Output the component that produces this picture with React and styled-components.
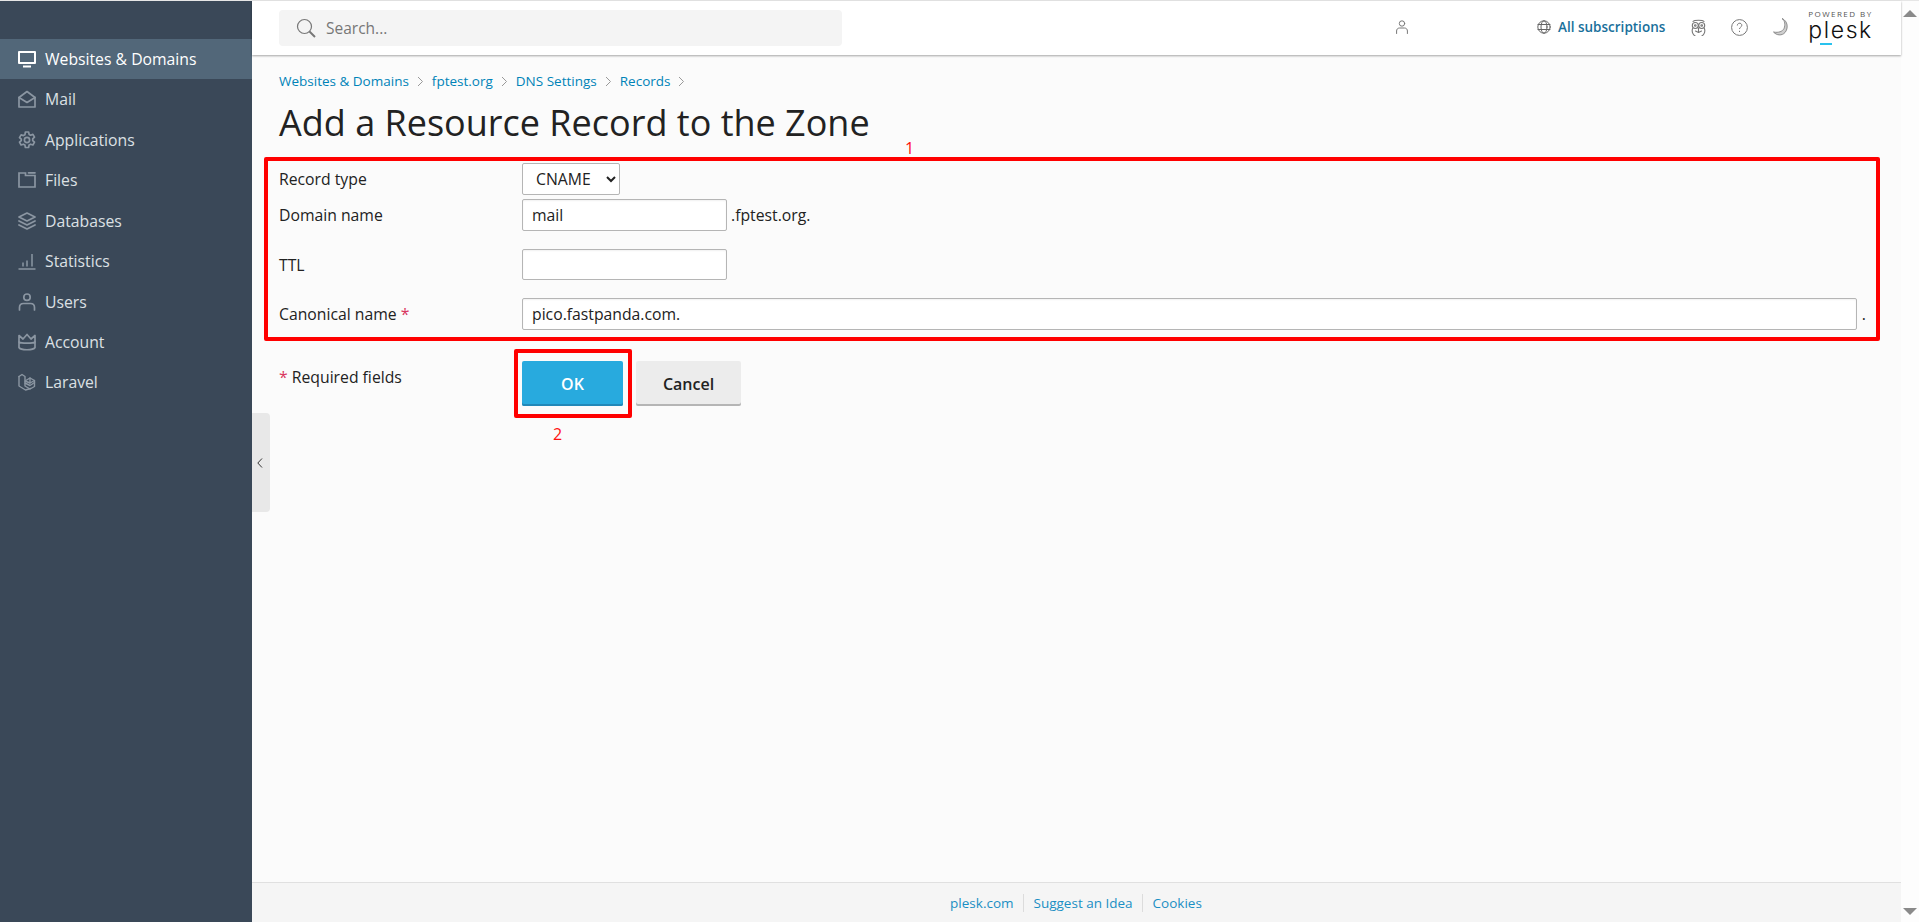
import React from "react";
import styled, { createGlobalStyle } from "styled-components";

const Global = createGlobalStyle`
  html, body { margin: 0; padding: 0; height: 100%; overflow: hidden; }
  body { font-family: "Open Sans", "Noto Sans", sans-serif; color: #222; background: #fdfdfd; }
  * { box-sizing: border-box; }
`;

const Page = styled.div`
  height: 922px;
  padding-top: 1px;
  background: #e6e6e6;
  display: grid;
  grid-template-columns: 252px 1fr 18px;
`;

const Sidebar = styled.nav`
  background: #3a4858;
  padding-top: 38px;
`;

const NavItem = styled.a`
  display: flex;
  align-items: center;
  gap: 9px;
  height: 40.47px;
  padding: 0 0 1px 18px;
  font-size: 15.75px;
  color: ${(p) => (p.$active ? "#ffffff" : "#dce0e4")};
  background: ${(p) => (p.$active ? "#526779" : "transparent")};
  svg { color: ${(p) => (p.$active ? "#ffffff" : "#8b96a2")}; flex: none; }
`;

const Main = styled.div`
  position: relative;
  display: flex;
  flex-direction: column;
  min-width: 0;
  background: #fbfbfb;
`;

const Header = styled.header`
  height: 54px;
  flex: none;
  background: #fff;
  box-shadow: 0 1px 2px rgba(0, 0, 0, 0.35);
  display: flex;
  align-items: center;
  padding: 0 0 2px 27px;
`;

const SearchBar = styled.label`
  width: 563px;
  height: 36px;
  margin-top: 2px;
  background: #f4f4f4;
  border-radius: 4px;
  display: flex;
  align-items: center;
  gap: 8px;
  padding-left: 17px;
  color: #777;
`;

const SearchInput = styled.input`
  flex: 1;
  min-width: 0;
  border: 0;
  outline: 0;
  background: transparent;
  font: 15.5px "Open Sans", sans-serif;
  &::placeholder { color: #777; opacity: 1; }
`;

const HeaderIcon = styled.span`
  display: flex;
  margin-left: ${(p) => p.$gap}px;
  color: #777;
`;

const Subs = styled.a`
  display: flex;
  align-items: center;
  gap: 7px;
  margin-left: 129px;
  font-size: 13.5px;
  font-weight: 600;
  color: #19709b;
  svg { color: #666; }
`;

const Logo = styled.div`
  position: relative;
  margin: 2px 0 0 20px;
  width: 68px;
  height: 40px;
  color: #222;
  display: flex;
  flex-direction: column;
  align-items: flex-start;
  &::after {
    content: "";
    position: absolute;
    left: 12px;
    top: 35px;
    width: 12px;
    height: 2px;
    background: #29c2ee;
  }
`;

const LogoTop = styled.span`
  font: 8px/10px "Open Sans", sans-serif;
  letter-spacing: 1.45px;
  color: #555;
  white-space: nowrap;
  margin-top: 1px;
`;

const LogoWord = styled.span`
  font: 300 23px/22px "Inter", sans-serif;
  letter-spacing: 1.6px;
  color: #111;
`;

const Content = styled.main`
  flex: 1;
  padding: 15px 21px 0 27px;
`;

const Crumbs = styled.div`
  display: flex;
  align-items: center;
  gap: 8px;
  height: 22px;
  font-size: 13.5px;
  color: #999;
`;

const Crumb = styled.a`
  color: #0083b8;
`;

const Title = styled.h1`
  margin: 6px 0 0;
  font-size: 36px;
  font-weight: 400;
  line-height: 50px;
  color: #222;
`;

const RecordForm = styled.form`
  position: relative;
  margin: 9px 0 0 -15px;
  border: 4px solid #ff0000;
  border-radius: 2px;
  padding: 2px 10px 7px 11px;
`;

const Note = styled.span`
  position: absolute;
  font: 16px/20px "Open Sans", sans-serif;
  color: #ff1010;
`;

const FormNote = styled(Note)`
  left: 637px;
  top: -23px;
`;

const OkNote = styled(Note)`
  left: 31px;
  top: 63px;
`;

const Row = styled.div`
  display: flex;
  align-items: center;
  margin-bottom: ${(p) => p.$after}px;
`;

const Label = styled.label`
  flex: none;
  width: 243px;
  font-size: 15.75px;
  color: #222;
`;

const Star = styled.span`
  color: #d9365e;
`;

const Select = styled.select`
  width: 98px;
  height: 32px;
  padding-left: 9px;
  font: 15.75px "Open Sans", sans-serif;
  color: #222;
  background: #fff;
  border: 1px solid #b5b5b5;
  border-radius: 2px;
`;

const Input = styled.input`
  height: ${(p) => p.$h || 32}px;
  width: ${(p) => (p.$wide ? "100%" : "205px")};
  flex: ${(p) => (p.$wide ? 1 : "none")};
  min-width: 0;
  padding: 0 9px;
  font: 15.75px "Open Sans", sans-serif;
  color: #222;
  background: #fff;
  border: 1px solid #b5b5b5;
  border-radius: 2px;
  box-shadow: inset 0 1px 2px rgba(0, 0, 0, 0.06);
`;

const Suffix = styled.span`
  flex: none;
  margin-left: ${(p) => p.$gap}px;
  font-size: 15.75px;
  color: #222;
`;

const Actions = styled.div`
  display: flex;
  margin-top: 20px;
`;

const Required = styled.div`
  flex: none;
  width: 243px;
  padding-top: 5px;
  font-size: 15.75px;
  line-height: 22px;
  color: #222;
`;

const OkWrap = styled.div`
  position: relative;
  margin-right: 13px;
`;

const Highlight = styled.span`
  position: absolute;
  left: -8px;
  top: -12px;
  width: 118px;
  height: 69px;
  border: 4px solid #ff0000;
  border-radius: 2px;
  pointer-events: none;
`;

const Button = styled.button`
  width: ${(p) => p.$w}px;
  height: 45px;
  border: 0;
  border-radius: 2px;
  font: 600 16px "Open Sans", sans-serif;
  color: ${(p) => (p.$primary ? "#fff" : "#222")};
  background: ${(p) => (p.$primary ? "#28aade" : "#ececec")};
  box-shadow: inset 0 -2px 0 ${(p) => (p.$primary ? "#2288b8" : "#b5b5b5")};
`;

const Footer = styled.footer`
  height: 40px;
  flex: none;
  background: #f5f5f5;
  border-top: 1px solid #e0e0e0;
  display: flex;
  align-items: center;
  justify-content: center;
  padding-right: 2px;
  font-size: 13.5px;
`;

const FootLink = styled.a`
  color: #1a8fc4;
  padding: 0 9px 0 10px;
  line-height: 18px;
  & + & { border-left: 1px solid #dcdcdc; }
`;

const Collapse = styled.button`
  position: absolute;
  left: 0;
  top: 412px;
  width: 18px;
  height: 99px;
  padding: 0 2px 0 0;
  border: 0;
  border-radius: 0 4px 4px 0;
  background: #e8e8e8;
  color: #333;
  display: flex;
  align-items: center;
  justify-content: center;
`;

const Scrollbar = styled.div`
  background: #fdfdfd;
  display: flex;
  flex-direction: column;
  justify-content: space-between;
  align-items: center;
  padding: 9px 0 7px;
`;

const Arrow = styled.span`
  width: 0;
  height: 0;
  border-left: 7px solid transparent;
  border-right: 7px solid transparent;
  ${(p) => (p.$down ? "border-top: 7px solid #8a8a8a;" : "border-bottom: 7px solid #8a8a8a;")}
`;

const Ico = ({ children, w = 18, h = 18, sw = 1.7, view }) => (
  <svg width={w} height={h} viewBox={view || `0 0 ${w} ${h}`} fill="none" stroke="currentColor" strokeWidth={sw} strokeLinecap="round" strokeLinejoin="round">
    {children}
  </svg>
);

const icons = {
  monitor: (
    <Ico sw={2}>
      <rect x="1" y="2" width="16" height="11" strokeLinecap="butt" />
      <path d="M5 16.5h8" strokeLinecap="butt" />
    </Ico>
  ),
  mail: (
    <Ico>
      <path d="M1 7.500 9 1.500l8 6V17H1z" />
      <path d="M1 7.500l8 5 8-5" />
    </Ico>
  ),
  gear: (
    <Ico>
      <path d="M7.400 1h3.200l.5 2.400 1.500.8 2.300-.8 1.600 2.800-1.800 1.600v1.800l1.800 1.600-1.600 2.800-2.300-.8-1.500.8-.5 2.500H7.400l-.5-2.500-1.500-.8-2.300.8-1.600-2.800 1.800-1.600V8.200L1.500 6.600l1.600-2.800 2.300.8 1.500-.8z" />
      <circle cx="9" cy="9" r="2.600" />
    </Ico>
  ),
  folder: (
    <Ico>
      <path d="M1 2h6.500v2.500H17V16H1z" strokeLinejoin="miter" />
      <path d="M10.500 1.800H17" />
    </Ico>
  ),
  layers: (
    <Ico>
      <path d="M9 1 17 5l-8 4-8-4z" />
      <path d="M1 9l8 4 8-4" />
      <path d="M1 13l8 4 8-4" />
    </Ico>
  ),
  chart: (
    <Ico sw={1.5}>
      <path d="M0.500 17h17" strokeLinecap="butt" />
      <path d="M5 14.500v-4M9 14.500v-6M14 14.500V2" strokeLinecap="butt" />
    </Ico>
  ),
  user: (
    <Ico>
      <circle cx="9" cy="4.200" r="3.200" />
      <path d="M1.500 17v-2.500C1.500 12 3.200 10.500 5.500 10.500h7c2.300 0 4 1.500 4 4V17" />
    </Ico>
  ),
  crown: (
    <Ico>
      <path d="M1 9V2.500l4 3.500L9 1.500 13 6l4-3.500V9" />
      <path d="M1 9c2 1.600 14 1.600 16 0v5.500c-1.500 3-14.500 3-16 0z" />
    </Ico>
  ),
  laravel: (
    <Ico sw={1.4}>
      <path d="M1 3.500 4 1.500l3 2v9.500l5 3 4.500-2.500V9.500" />
      <path d="M1 3.500V13l6.500 4 5-1.500" />
      <path d="M7 8l5-3 4.500 2.500L12 10z" />
      <path d="M12 5v5M16.500 7.500v2L12 12.500 7 10" />
    </Ico>
  ),
};

const items = [
  ["monitor", "Websites & Domains", true],
  ["mail", "Mail"],
  ["gear", "Applications"],
  ["folder", "Files"],
  ["layers", "Databases"],
  ["chart", "Statistics"],
  ["user", "Users"],
  ["crown", "Account"],
  ["laravel", "Laravel"],
];

const Chevron = () => (
  <svg width="7" height="11" viewBox="0 0 7 11" fill="none" stroke="#999" strokeWidth="1">
    <path d="M1 1l4.500 4.500L1 10" />
  </svg>
);

export default function App() {
  return (
    <>
      <Global />
      <Page>
        <Sidebar>
          {items.map(([icon, label, active]) => (
            <NavItem key={label} $active={active}>
              {icons[icon]}
              {label}
            </NavItem>
          ))}
        </Sidebar>
        <Main>
          <Header>
            <SearchBar>
              <svg width="20" height="20" viewBox="0 0 20 20" fill="none" stroke="#777" strokeWidth="1.200">
                <circle cx="8.500" cy="8.500" r="7" />
                <path d="M13.500 13.500 19 19" strokeWidth="2" />
              </svg>
              <SearchInput placeholder="Search..." />
            </SearchBar>
            <HeaderIcon $gap={554}>
              <Ico w={12} h={14} sw={1}>
                <circle cx="6" cy="3.500" r="2.700" />
                <path d="M.6 13.500v-2.500c0-1.700 1-3 3-3h4.800c2 0 3 1.300 3 3v2.500" />
              </Ico>
            </HeaderIcon>
            <Subs>
              <Ico w={14} h={14} sw={1}>
                <circle cx="7" cy="7" r="6.200" />
                <ellipse cx="7" cy="7" rx="3" ry="6.200" />
                <path d="M1 4.500h12M1 9.500h12" />
              </Ico>
              All subscriptions
            </Subs>
            <HeaderIcon $gap={25}>
              <Ico w={17} h={18} sw={1.100}>
                <path d="M3 3.500C4.500 1.800 12.500 1.800 14 3.500" />
                <path d="M2.600 10.500a6.300 6.300 0 1 0 11.800 0" />
                <circle cx="5.300" cy="7.500" r="3" />
                <circle cx="11.700" cy="7.500" r="3" />
                <circle cx="5.300" cy="7.500" r=".8" />
                <circle cx="11.700" cy="7.500" r=".8" />
                <path d="M8.500 10v3.500M5.500 13l3 1.500 3-1.500" />
              </Ico>
            </HeaderIcon>
            <HeaderIcon $gap={24}>
              <svg width="17" height="17" viewBox="0 0 17 17" fill="none" stroke="currentColor" strokeWidth="1">
                <circle cx="8.500" cy="8.500" r="7.900" />
                <path d="M6.300 6.500c0-3 4.500-3 4.500-.2 0 1.800-2.300 1.900-2.300 3.700" />
                <path d="M8.500 11.800v1.200" />
              </svg>
            </HeaderIcon>
            <HeaderIcon $gap={25}>
              <svg width="15" height="18" viewBox="0 0 15 18" fill="none">
                <path d="M9 .5c3 2 3.500 6.500 2 10-1.500 3-5.500 4.500-10.500 3.500 3 3.500 8.500 4 11.500.5 3.500-4 3-11.500-3-14z" fill="#cfcfcf" stroke="#777" strokeWidth=".8" />
              </svg>
            </HeaderIcon>
            <Logo>
              <LogoTop>POWERED BY</LogoTop>
              <LogoWord>plesk</LogoWord>
            </Logo>
          </Header>
          <Content>
            <Crumbs>
              <Crumb>Websites &amp; Domains</Crumb>
              <Chevron />
              <Crumb>fptest.org</Crumb>
              <Chevron />
              <Crumb>DNS Settings</Crumb>
              <Chevron />
              <Crumb>Records</Crumb>
              <Chevron />
            </Crumbs>
            <Title>Add a Resource Record to the Zone</Title>
            <RecordForm>
              <FormNote>1</FormNote>
              <Row $after={4}>
                <Label>Record type</Label>
                <Select defaultValue="CNAME">
                  <option>CNAME</option>
                </Select>
              </Row>
              <Row $after={18}>
                <Label>Domain name</Label>
                <Input defaultValue="mail" />
                <Suffix $gap={4}>.fptest.org.</Suffix>
              </Row>
              <Row $after={18}>
                <Label>TTL</Label>
                <Input $h={31} />
              </Row>
              <Row $after={0}>
                <Label>
                  Canonical name <Star>*</Star>
                </Label>
                <Input $wide defaultValue="pico.fastpanda.com." />
                <Suffix $gap={5}>.</Suffix>
              </Row>
            </RecordForm>
            <Actions>
              <Required>
                <Star>*</Star> Required fields
              </Required>
              <OkWrap>
                <Button $primary $w={101} type="button">OK</Button>
                <Highlight />
                <OkNote>2</OkNote>
              </OkWrap>
              <Button $w={105} type="button">Cancel</Button>
            </Actions>
          </Content>
          <Footer>
            <FootLink>plesk.com</FootLink>
            <FootLink>Suggest an Idea</FootLink>
            <FootLink>Cookies</FootLink>
          </Footer>
          <Collapse type="button" aria-label="Collapse">
            <svg width="6" height="10" viewBox="0 0 6 10" fill="none" stroke="#333" strokeWidth="1">
              <path d="M5 .5.8 5 5 9.500" />
            </svg>
          </Collapse>
        </Main>
        <Scrollbar>
          <Arrow />
          <Arrow $down />
        </Scrollbar>
      </Page>
    </>
  );
}
